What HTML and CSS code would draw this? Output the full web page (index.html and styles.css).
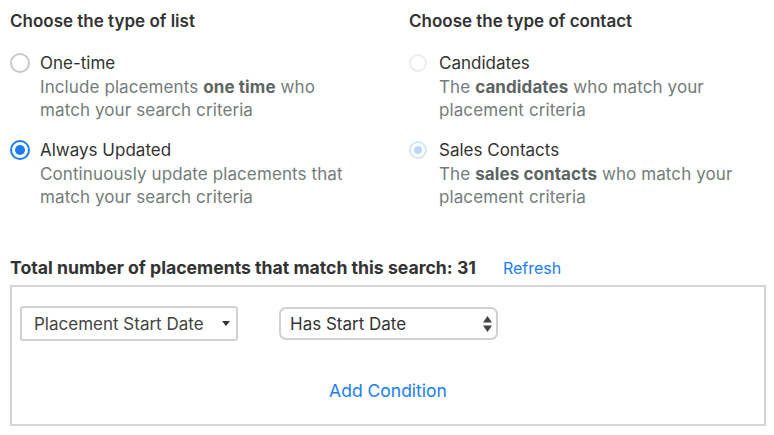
FILE: index.html
```html
<!DOCTYPE html>
<html>
<head>
<meta charset="utf-8">
<link rel="stylesheet" href="styles.css">
</head>
<body>
<div class="page">
  <div class="columns">
    <section class="col">
      <h2 class="heading">Choose the type of list</h2>
      <div class="option">
        <span class="radio"></span>
        <div class="opt-text">
          <div class="label">One-time</div>
          <div class="desc">Include placements <b>one time</b> who<br>match your search criteria</div>
        </div>
      </div>
      <div class="option">
        <span class="radio checked"></span>
        <div class="opt-text">
          <div class="label">Always Updated</div>
          <div class="desc">Continuously update placements that<br>match your search criteria</div>
        </div>
      </div>
    </section>
    <section class="col col-right">
      <h2 class="heading">Choose the type of contact</h2>
      <div class="option">
        <span class="radio faint"></span>
        <div class="opt-text">
          <div class="label">Candidates</div>
          <div class="desc">The <b>candidates</b> who match your<br>placement criteria</div>
        </div>
      </div>
      <div class="option">
        <span class="radio faint checked-faint"></span>
        <div class="opt-text">
          <div class="label">Sales Contacts</div>
          <div class="desc">The <b>sales contacts</b> who match your<br>placement criteria</div>
        </div>
      </div>
    </section>
  </div>
  <div class="total-row">
    <span class="total">Total number of placements that match this search: 31</span>
    <a class="link refresh">Refresh</a>
  </div>
  <div class="box">
    <div class="conditions">
      <div class="select select-a">
        <span>Placement Start Date</span>
        <svg class="caret" width="8" height="5" viewBox="0 0 8 5"><path d="M0 0h8L4 5z" fill="#333"/></svg>
      </div>
      <div class="select select-b">
        <span>Has Start Date</span>
        <svg class="updown" width="9" height="16" viewBox="0 0 9 16"><path d="M4.5 0L9 6.5H0z M0 9.5h9L4.5 16z" fill="#444"/></svg>
      </div>
    </div>
    <div class="add-row"><a class="link add">Add Condition</a></div>
  </div>
</div>
</body>
</html>
```
FILE: styles.css
```css
html, body {
  margin: 0;
  padding: 0;
  background: #fff;
}
body {
  font-family: Inter, Lato, sans-serif;
  color: #333;
}
.page {
  padding: 9px 8px 0 10px;
}
.columns {
  display: flex;
}
.col {
  width: 399px;
  flex: none;
}
.col-right {
  width: 355px;
}
.heading {
  margin: 0 0 18px 0;
  font-size: 17px;
  font-weight: 600;
  line-height: 24px;
  color: #333;
}
.option {
  display: flex;
  align-items: flex-start;
  margin-bottom: 16px;
}
.radio {
  box-sizing: border-box;
  width: 20px;
  height: 20px;
  border-radius: 50%;
  border: 2px solid #c8c8c8;
  margin-top: 2px;
  margin-right: 10px;
  flex: none;
  position: relative;
}
.radio.checked {
  border-color: #1a7ef0;
}
.radio.checked::after {
  content: "";
  position: absolute;
  left: 3px;
  top: 3px;
  width: 10px;
  height: 10px;
  border-radius: 50%;
  background: #1a7ef0;
}
.radio.faint {
  border-color: #ececec;
  width: 18px;
  height: 18px;
  margin-top: 3px;
  margin-right: 12px;
}
.radio.checked-faint {
  border-color: #d3e6fb;
}
.radio.checked-faint::after {
  content: "";
  position: absolute;
  left: 3px;
  top: 3px;
  width: 8px;
  height: 8px;
  border-radius: 50%;
  background: #bcd9f8;
}
.label {
  font-size: 17px;
  line-height: 25px;
  color: #333;
}
.desc {
  font-size: 17px;
  line-height: 23px;
  color: #737c7a;
  letter-spacing: 0.1px;
}
.desc b {
  font-weight: 700;
  color: #5c6563;
}
.total-row {
  display: flex;
  align-items: baseline;
  gap: 27px;
  margin-top: 32px;
  height: 22px;
  line-height: 22px;
}
.total {
  font-size: 17.65px;
  font-weight: 700;
  color: #333;
}
.link {
  color: #1a7ef0;
  font-size: 16px;
  cursor: pointer;
}
.link.add {
  font-size: 17.5px;
}
.box {
  box-sizing: border-box;
  width: 756px;
  height: 141px;
  margin-top: 6px;
  border: 2px solid #d2d6d5;
  box-shadow: 0 2px 3px rgba(0,0,0,0.06);
  padding: 19px 8px 0 8px;
}
.conditions {
  display: flex;
  gap: 41px;
}
.select {
  box-sizing: border-box;
  display: flex;
  align-items: center;
  justify-content: space-between;
  font-size: 17px;
  color: #444;
  border: 2px solid #d0d0d0;
}
.select-a {
  width: 218px;
  height: 35px;
  border-radius: 3px;
  padding: 0 6px 0 12px;
}
.select-b {
  width: 219px;
  height: 33px;
  margin-top: 1px;
  border-radius: 7px;
  padding: 0 4px 0 9px;
  color: #333;
}
.add-row {
  text-align: center;
  margin-top: 39px;
  line-height: 22px;
}
```
